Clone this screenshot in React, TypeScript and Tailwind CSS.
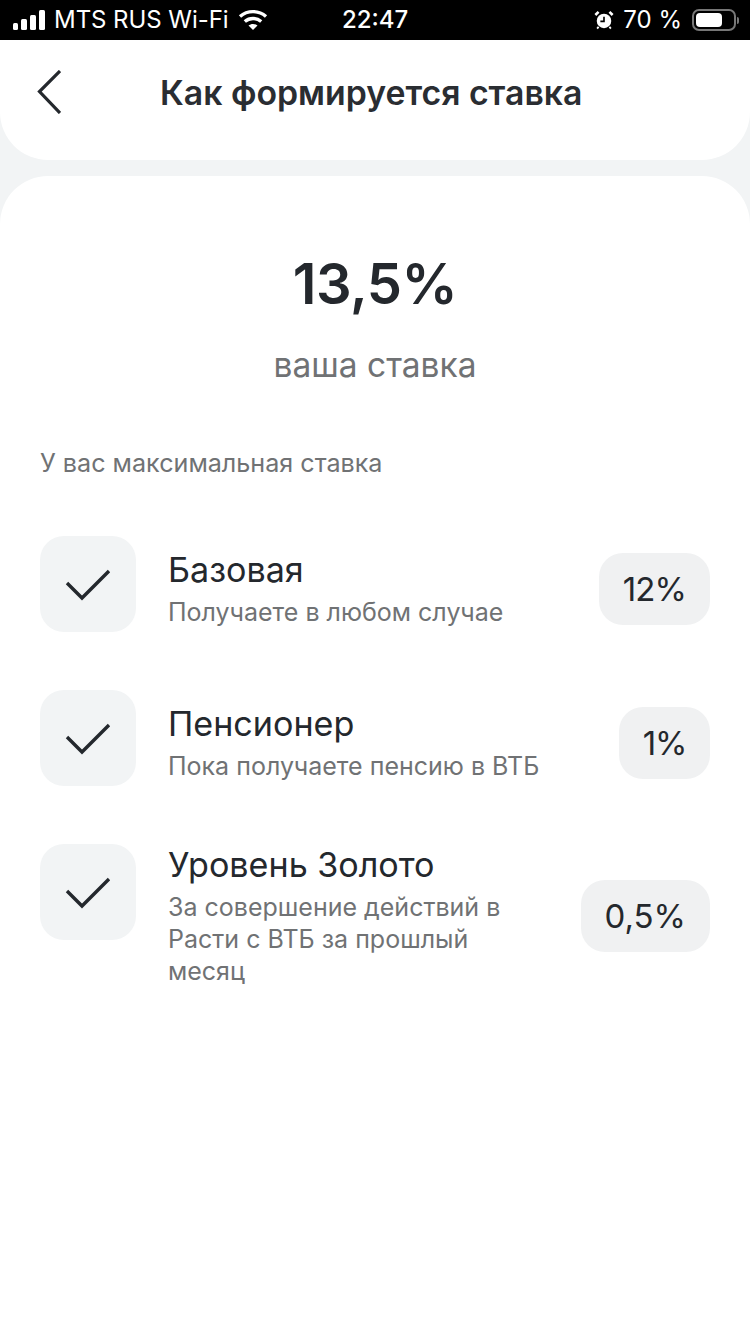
import React from 'react';

const rates = [
  { title: 'Базовая', note: 'Получаете в любом случае', value: '12%', top: 'mb-[58px]', badge: 'mt-[17px] tracking-[-0.9px]', text: 'pt-[14px]' },
  { title: 'Пенсионер', note: 'Пока получаете пенсию в ВТБ', value: '1%', top: 'mb-[58px]', badge: 'mt-[17px] tracking-[-1.3px]', text: 'pt-[14px]' },
  { title: 'Уровень Золото', note: 'За совершение действий в Расти с ВТБ за прошлый месяц', value: '0,5%', top: '', badge: 'mt-[36px] tracking-[0px]', text: 'pt-px' },
];

const StatusBar = () => (
  <div className="h-10 bg-black text-white flex items-center pl-[13px] pr-[11px] text-[24px] leading-none shrink-0 relative">
    <div className="flex items-end gap-[3px] h-[20px] mr-[9px]">
      <span className="w-[5px] h-[7px] rounded-[1.5px] bg-white" />
      <span className="w-[6px] h-[11px] rounded-[1.5px] bg-white" />
      <span className="w-[6px] h-[15px] rounded-[1.5px] bg-white" />
      <span className="w-[6px] h-[20px] rounded-[1.5px] bg-white" />
    </div>
    <span className="font-normal tracking-[-0.05px]">MTS RUS Wi-Fi</span>
    <svg width="30" height="22" viewBox="0 0 30 22" className="ml-[9px]" fill="none">
      <path d="M2 7.5C9.5 1 20.500 1 28 7.500" stroke="white" strokeWidth="3.400" />
      <path d="M6.800 12.500C11.500 8.500 18.500 8.500 23.200 12.500" stroke="white" strokeWidth="3.400" />
      <path d="M10.500 16.600L15 21L19.500 16.600C17 14.500 13 14.500 10.500 16.600Z" fill="white" />
    </svg>
    <span className="absolute left-[342px] font-medium">22:47</span>
    <div className="ml-auto flex items-center">
      <svg width="20" height="20" viewBox="0 0 22 22" className="mr-[9px]" fill="none">
        <circle cx="11" cy="12" r="8" fill="white" />
        <path d="M11 7.500V12.500H7" stroke="black" strokeWidth="1.800" />
        <path d="M1.500 5.500L5 2M20.500 5.500L17 2" stroke="white" strokeWidth="2.800" />
        <path d="M5 18.500L3.500 20.500M17 18.500L18.500 20.500" stroke="white" strokeWidth="2" />
      </svg>
      <span>70 %</span>
      <div className="ml-[10px] flex items-center">
        <div className="w-[44px] h-[22px] rounded-[7px] border-2 border-[#777777] p-[2px]">
          <div className="w-[26px] h-full rounded-[4px] bg-white" />
        </div>
        <span className="w-[2px] h-[7px] ml-[1px] rounded-r-sm bg-[#777777]" />
      </div>
    </div>
  </div>
);

const Check = () => (
  <svg width="46" height="34" viewBox="0 0 46 34" fill="none">
    <path d="M2 16L17 31L44 4" stroke="#24282d" strokeWidth="3.400" />
  </svg>
);

export default function App() {
  return (
    <div className="w-[750px] h-[1334px] bg-[#f2f4f5] flex flex-col overflow-hidden font-['Inter',sans-serif]">
      <StatusBar />

      {/* Header */}
      <div className="h-[120px] bg-white rounded-b-[48px] flex items-center shrink-0 relative">
        <svg width="24" height="44" viewBox="0 0 24 44" fill="none" className="absolute left-[37px] top-[30px]">
          <path d="M23 1L2.500 21.500L23 43" stroke="#24282d" strokeWidth="3.200" />
        </svg>
        <h1 className="w-full pl-[160px] text-[33.800px] font-semibold leading-[40px] text-[#2a2d32] -mt-[15px]">Как формируется ставка</h1>
      </div>

      {/* Card */}
      <div className="flex-1 mt-4 bg-white rounded-t-[48px] px-10">
        <div className="pt-[70px] text-center text-[56px] leading-[76px] font-semibold tracking-[-0.5px] text-[#24282d]">13,5%</div>
        <div className="mt-[23px] text-center text-[33.500px] leading-[40px] text-[#707274]">ваша ставка</div>
        <div className="mt-[62px] text-[25.150px] leading-[32px] text-[#707274]">У вас максимальная ставка</div>

        <div className="mt-[57px]">
          {rates.map((rate) => (
            <div key={rate.title} className={`flex items-start ${rate.top}`}>
              <div className="w-24 h-24 rounded-[24px] bg-[#f2f4f5] flex items-center justify-center shrink-0">
                <Check />
              </div>
              <div className={`ml-8 w-[378px] ${rate.text}`}>
                <div className="text-[34.100px] leading-[40px] text-[#24282d]">{rate.title}</div>
                <div className="mt-[6px] text-[25px] leading-[32px] text-[#707274]">{rate.note}</div>
              </div>
              <div className={`ml-auto h-[72px] px-6 pt-px rounded-[24px] bg-[#f0f1f2] flex items-center text-[33px] text-[#24282d] ${rate.badge}`}>
                {rate.value}
              </div>
            </div>
          ))}
        </div>
      </div>
    </div>
  );
}
